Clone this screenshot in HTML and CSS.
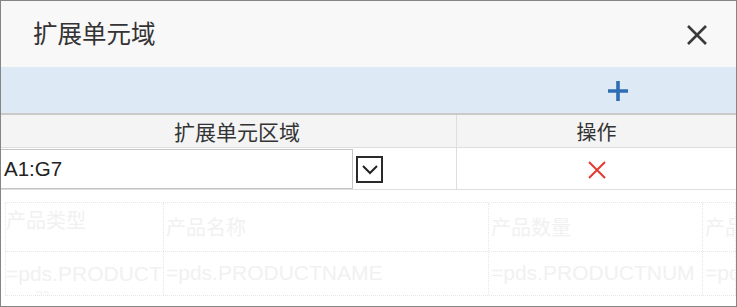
FILE: index.html
```html
<!DOCTYPE html>
<html lang="zh">
<head>
<meta charset="utf-8">
<title>扩展单元域</title>
<link rel="stylesheet" href="styles.css">
</head>
<body>
<div class="dialog">
  <div class="title-bar">
    <span class="title">扩展单元域</span>
    <span class="close" aria-label="关闭">
      <svg width="22" height="22" viewBox="0 0 22 22"><path d="M2 2 L20 20 M20 2 L2 20" stroke="#3a3a3a" stroke-width="2.6" fill="none"/></svg>
    </span>
  </div>
  <div class="toolbar">
    <span class="add">
      <svg width="22" height="22" viewBox="0 0 22 22"><path d="M11 1 V21 M1 11 H21" stroke="#2f6db3" stroke-width="3.6" fill="none"/></svg>
    </span>
  </div>
  <div class="table">
    <div class="row head">
      <div class="cell c-range">扩展单元区域</div>
      <div class="cell c-op">操作</div>
    </div>
    <div class="row body">
      <div class="cell c-edit">
        <div class="input">A1:G7</div>
        <span class="drop">
          <svg width="18" height="12" viewBox="0 0 18 12"><path d="M2 2 L9 9 L16 2" stroke="#222" stroke-width="2" fill="none"/></svg>
        </span>
      </div>
      <div class="cell c-op del">
        <svg width="20" height="20" viewBox="0 0 20 20"><path d="M2 2 L18 18 M18 2 L2 18" stroke="#e53a2f" stroke-width="2" fill="none"/></svg>
      </div>
    </div>
  </div>
  <div class="sheet">
    <div class="srow r1">
      <div class="scell s1 top">产品类型</div>
      <div class="scell s2">产品名称</div>
      <div class="scell s3">产品数量</div>
      <div class="scell s4">产品</div>
    </div>
    <div class="srow r2">
      <div class="scell s1 top"><span class="clip">=pds.PRODUCTTYPE</span><span class="small">...22</span></div>
      <div class="scell s2 top">=pds.PRODUCTNAME</div>
      <div class="scell s3 top">=pds.PRODUCTNUM</div>
      <div class="scell s4 top">=pds</div>
    </div>
  </div>
</div>
</body>
</html>
```
FILE: styles.css
```css
* { box-sizing: border-box; }
html, body { margin: 0; padding: 0; background: #fff; }
body { font-family: "Liberation Sans", "Noto Sans CJK SC", sans-serif; }

.dialog {
  width: 737px;
  height: 307px;
  border: 1px solid #858585;
  display: flex;
  flex-direction: column;
  overflow: hidden;
  background: #fff;
}

.title-bar {
  height: 66px;
  flex: none;
  background: #f8f8f8;
  display: flex;
  align-items: center;
  justify-content: space-between;
  padding: 0 28px 0 32px;
}
.title {
  font-family: "Noto Sans CJK SC", sans-serif;
  font-size: 24.5px;
  color: #333;
  line-height: 1;
  margin-top: -2px;
}
.close { display: flex; margin-top: 2px; }

.toolbar {
  height: 48px;
  flex: none;
  background: #dde9f5;
  border-bottom: 2px solid #cacaca;
  display: flex;
  align-items: center;
  justify-content: flex-end;
  padding: 2px 107px 0 0;
}
.add { display: flex; }

.table { flex: none; }
.row { display: flex; }
.row.head {
  height: 33px;
  background: #f4f4f4;
  border-bottom: 1px solid #dedede;
}
.row.body {
  height: 42px;
  background: #fff;
  border-bottom: 1px solid #dedede;
}
.cell {
  display: flex;
  align-items: center;
  justify-content: center;
}
.c-range, .c-edit {
  width: 456px;
  border-right: 1px solid #dedede;
}
.c-range {
  font-family: "Noto Sans CJK SC", sans-serif;
  font-size: 21px;
  color: #333;
  padding-left: 17px;
}
.c-op {
  flex: 1;
  font-family: "Noto Sans CJK SC", sans-serif;
  font-size: 20px;
  color: #333;
}
.c-op.del { padding-top: 3px; }
.c-edit { justify-content: flex-start; }
.input {
  width: 352px;
  height: 40px;
  border: 1px solid #c4c4c4;
  border-left: none;
  background: #fff;
  font-size: 20.5px;
  color: #222;
  display: flex;
  align-items: center;
  padding-left: 3px;
}
.drop {
  margin-left: 3px;
  width: 27px;
  height: 27px;
  border: 2px solid #2a2a2a;
  display: flex;
  align-items: center;
  justify-content: center;
  margin-top: 1px;
}
.drop svg { margin-top: 1px; }

.sheet {
  margin-top: 12px;
  margin-left: 4px;
  color: #f1f1f1;
  font-family: "Noto Sans CJK SC", sans-serif;
  font-size: 20px;
}
.srow {
  display: flex;
  border-top: 1px dotted #e6e6e6;
}
.r1 { height: 49px; }
.r2 { height: 45px; border-bottom: 1px dotted #e6e6e6; }
.scell {
  overflow: hidden;
  white-space: nowrap;
  display: flex;
  align-items: center;
  border-right: 1px dotted #e6e6e6;
  line-height: 1.1;
}
.scell.top { align-items: flex-start; padding-top: 6px; }
.s1 { width: 159px; border-left: 1px dotted #e6e6e6; flex-direction: column; align-items: flex-start; }
.s2 { width: 325px; padding-left: 2px; }
.s3 { width: 214px; padding-left: 2px; }
.s4 { flex: 1; padding-left: 2px; }
.r2 .scell { font-family: "Liberation Sans", sans-serif; font-size: 21px; padding-top: 9px; }
.r1 .s1 { padding-top: 6px; }
.clip { display: block; flex: none; max-width: 100%; overflow: hidden; line-height: 1.25; }
.small { flex: none; font-size: 12px; line-height: 1; padding-left: 20px; margin-top: 3px; }
```
